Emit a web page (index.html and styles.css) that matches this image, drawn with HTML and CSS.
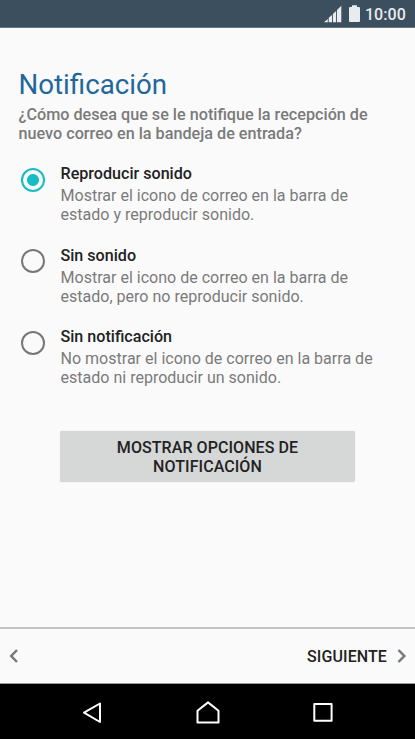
FILE: index.html
```html
<!DOCTYPE html>
<html lang="es">
<head>
<meta charset="utf-8">
<title>Notificación</title>
<link rel="stylesheet" href="styles.css">
</head>
<body>
<header class="status">
  <svg class="signal" width="18" height="18" viewBox="0 0 18 18"><path d="M0 17.300L3.800 14v3.300zM4.700 17.300v-4.500L8 9.900v7.400zM8.900 17.300V9l3.200-3v11.300zM13 17.300V5.100L17.300.8v16.500z"/></svg>
  <svg class="battery" width="12" height="18" viewBox="0 0 12 18"><path d="M1 2h2V.3h5V2h2q1 0 1 1v13q0 1-1 1H1q-1 0-1-1V3q0-1 1-1z"/></svg>
  <span class="clock">10:00</span>
</header>
<main class="content">
  <h1 class="title">Notificación</h1>
  <p class="question">¿Cómo desea que se le notifique la recepción de<br>nuevo correo en la bandeja de entrada?</p>
  <div class="options">
    <div class="option"><span class="radio selected"></span><div class="copy"><h2>Reproducir sonido</h2><p>Mostrar el icono de correo en la barra de<br>estado y reproducir sonido.</p></div></div>
    <div class="option"><span class="radio"></span><div class="copy"><h2>Sin sonido</h2><p>Mostrar el icono de correo en la barra de<br>estado, pero no reproducir sonido.</p></div></div>
    <div class="option"><span class="radio"></span><div class="copy"><h2>Sin notificación</h2><p>No mostrar el icono de correo en la barra de<br>estado ni reproducir un sonido.</p></div></div>
  </div>
  <button class="more">MOSTRAR OPCIONES DE<br>NOTIFICACIÓN</button>
</main>
<footer class="pager">
  <svg width="10" height="16" viewBox="0 0 10 16"><path d="M8 2L2.200 8 8 14"/></svg>
  <span class="next">SIGUIENTE</span>
  <svg width="10" height="16" viewBox="0 0 10 16"><path d="M1.500 2l5.800 6-5.800 6"/></svg>
</footer>
<nav class="nav">
  <svg width="24" height="26" viewBox="0 0 24 26"><path d="M20 3.500v18.500L4 12.700z"/></svg>
  <svg width="24" height="26" viewBox="0 0 24 26"><path d="M1.500 22.600V10.700L12 2.400l10.500 8.300v11.900z"/></svg>
  <svg width="24" height="26" viewBox="0 0 24 26"><path d="M3.300 3.900h17.300v16.900H3.300z"/></svg>
</nav>
</body>
</html>
```
FILE: styles.css
```css
* { box-sizing: border-box; }
body { margin: 0; width: 415px; height: 739px; display: flex; flex-direction: column; background: #fafafa; font-family: Roboto, sans-serif; overflow: hidden; }
h1, h2, p { margin: 0; }
.status { height: 28px; background: #3c4f5f; border-bottom: 1px solid #687784; display: flex; align-items: center; justify-content: flex-end; padding: 1px 9px 0 0; color: #e9ecee; fill: #e9ecee; }
.battery { margin-left: 7px; }
.clock { margin-left: 4px; font-size: 16px; font-weight: 500; letter-spacing: .1px; }
.content { flex: 1; padding: 39px 18px 0 18.500px; }
.title { font-size: 27.700px; line-height: 36px; font-weight: 400; color: #21679c; }
.question { font-size: 16.200px; line-height: 19px; font-weight: 500; color: #7a7a7a; margin-top: 2px; white-space: nowrap; }
.options { margin-top: 20px; }
.option { display: flex; height: 81px; }
.option:first-child { height: 82px; }
.option:nth-child(2) .radio { margin-top: 4px; }
.radio { width: 24px; height: 24px; margin: 5px 0 0 2.500px; border: 2.400px solid #777; border-radius: 50%; }
.radio.selected { border-color: #18bcc5; background: radial-gradient(circle, #18bcc5 5.500px, transparent 6.500px); }
.copy { margin-left: 15.500px; white-space: nowrap; }
.copy h2 { font-size: 16.120px; line-height: 22px; font-weight: 500; color: #222; }
.copy p { margin-top: 1px; font-size: 16.040px; line-height: 19px; color: #7a7a7a; }
.more { display: block; width: 295px; height: 51px; margin: 24px 0 0 41.500px; padding: 1px 0 0; border: 0; border-radius: 2px; background: #d6d7d7; box-shadow: 0 0 1px #0003; font: 500 16px/19px Roboto, sans-serif; letter-spacing: .07px; color: #222; }
.pager { height: 57px; border-top: 2px solid #c4c4c4; border-bottom: 1px solid #999; display: flex; align-items: center; padding: 0 8px 0 9px; fill: none; stroke: #777; stroke-width: 2.500; }
.pager svg { margin-top: -1px; }
.next { margin-left: auto; margin-right: 10px; font-size: 16px; letter-spacing: .1px; font-weight: 500; color: #222; }
.nav { height: 55px; background: #000; display: flex; align-items: center; justify-content: space-between; padding: 2px 80px 0; fill: none; stroke: #fff; stroke-width: 2; stroke-linejoin: round; }
```
